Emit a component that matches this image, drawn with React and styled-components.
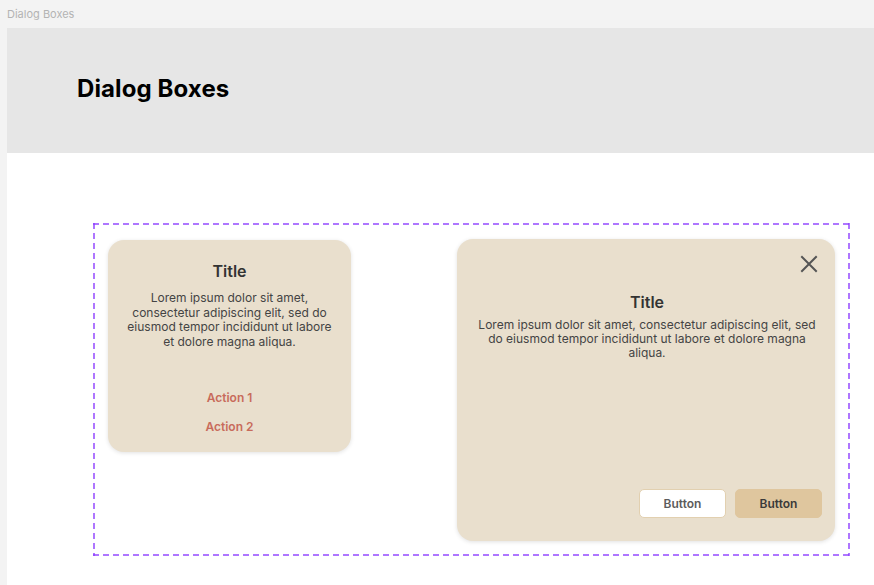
import React from 'react';
import styled, { createGlobalStyle } from 'styled-components';

const GlobalStyle = createGlobalStyle`
  html, body {
    margin: 0;
    padding: 0;
    background: #f3f3f3;
    font-family: Inter, "Noto Sans", "Liberation Sans", sans-serif;
  }
`;

const dashColor = 'rgba(140, 60, 255, 0.7)';

export default function App() {
  return (
    <>
      <GlobalStyle />
      <CanvasLabel>Dialog Boxes</CanvasLabel>
      <Frame>
        <Header>
          <PageTitle>Dialog Boxes</PageTitle>
        </Header>
        <Section>
          <Variants>
            <SmallDialog>
              <DialogTitle>Title</DialogTitle>
              <Body>
                Lorem ipsum dolor sit amet, consectetur adipiscing elit, sed do
                eiusmod tempor incididunt ut labore et dolore magna aliqua.
              </Body>
              <Actions>
                <ActionLink>Action 1</ActionLink>
                <ActionLink>Action 2</ActionLink>
              </Actions>
            </SmallDialog>

            <LargeDialog>
              <CloseRow>
                <CloseButton aria-label="close">
                  <svg width="18" height="18" viewBox="0 0 18 18">
                    <path
                      d="M2 2L16 16M16 2L2 16"
                      stroke="#555"
                      strokeWidth="2"
                      strokeLinecap="square"
                    />
                  </svg>
                </CloseButton>
              </CloseRow>
              <DialogTitle>Title</DialogTitle>
              <Body wide>
                Lorem ipsum dolor sit amet, consectetur adipiscing elit, sed do
                eiusmod tempor incididunt ut labore et dolore magna aliqua.
              </Body>
              <ButtonRow>
                <Button>Button</Button>
                <Button primary>Button</Button>
              </ButtonRow>
            </LargeDialog>
          </Variants>
        </Section>
      </Frame>
    </>
  );
}

const CanvasLabel = styled.div`
  height: 28px;
  line-height: 28px;
  padding-left: 7px;
  font-size: 11px;
  color: #b3b3b3;
`;

const Frame = styled.div`
  margin-left: 7px;
  background: #ffffff;
  height: 557px;
`;

const Header = styled.div`
  height: 125px;
  background: #e6e6e6;
  display: flex;
  align-items: center;
  padding-left: 70px;
`;

const PageTitle = styled.h1`
  margin: 0;
  font-size: 24px;
  font-weight: 700;
  color: #000;
  letter-spacing: 0.1px;
  position: relative;
  top: -2px;
`;

const Section = styled.div`
  padding-top: 70px;
  padding-left: 86px;
`;

const Variants = styled.div`
  width: 757px;
  height: 333px;
  box-sizing: border-box;
  padding: 17px 15px 15px 15px;
  display: flex;
  justify-content: space-between;
  align-items: flex-start;
  background:
    repeating-linear-gradient(90deg, ${dashColor} 0 6px, transparent 6px 10px) top left / 100% 2px no-repeat,
    repeating-linear-gradient(90deg, ${dashColor} 0 6px, transparent 6px 10px) bottom left / 100% 2px no-repeat,
    repeating-linear-gradient(180deg, ${dashColor} 0 6px, transparent 6px 10px) top left / 2px 100% no-repeat,
    repeating-linear-gradient(180deg, ${dashColor} 0 6px, transparent 6px 10px) top right / 2px 100% no-repeat;
`;

const Card = styled.div`
  background: #e9dfcd;
  border-radius: 16px;
  box-shadow: 0 1px 4px rgba(0, 0, 0, 0.12);
  box-sizing: border-box;
  display: flex;
  flex-direction: column;
  align-items: center;
  text-align: center;
`;

const SmallDialog = styled(Card)`
  width: 243px;
  height: 212px;
  padding: 22px 16px 0;
`;

const LargeDialog = styled(Card)`
  width: 378px;
  height: 302px;
  margin-top: -1px;
  padding: 16px 13px 23px 15px;
`;

const DialogTitle = styled.div`
  font-size: 16px;
  font-weight: 600;
  line-height: 19px;
  color: #333;
`;

const Body = styled.p`
  margin: ${({ wide }) => (wide ? '6px 0 0' : '10px 0 0')};
  font-size: 12px;
  line-height: ${({ wide }) => (wide ? '14px' : '14.5px')};
  color: #444;
  padding: ${({ wide }) => (wide ? '0 2px' : '0')};
`;

const Actions = styled.div`
  margin-top: 41px;
  display: flex;
  flex-direction: column;
  gap: 14px;
`;

const ActionLink = styled.div`
  font-size: 12px;
  font-weight: 600;
  line-height: 15px;
  color: #c86b5b;
`;

const CloseRow = styled.div`
  align-self: stretch;
  display: flex;
  justify-content: flex-end;
  padding-right: 4px;
  margin-bottom: 20px;
`;

const CloseButton = styled.div`
  width: 18px;
  height: 18px;
  display: flex;
`;

const ButtonRow = styled.div`
  margin-top: auto;
  align-self: stretch;
  display: flex;
  justify-content: flex-end;
  gap: 9px;
`;

const Button = styled.div`
  width: 87px;
  height: 29px;
  box-sizing: border-box;
  border-radius: 5px;
  display: flex;
  align-items: center;
  justify-content: center;
  font-size: 12px;
  font-weight: 600;
  color: ${({ primary }) => (primary ? '#3a3a3a' : '#5c5c5c')};
  background: ${({ primary }) => (primary ? '#dfc69e' : '#ffffff')};
  border: 1px solid ${({ primary }) => (primary ? '#dfc69e' : '#e2d0b0')};
`;
